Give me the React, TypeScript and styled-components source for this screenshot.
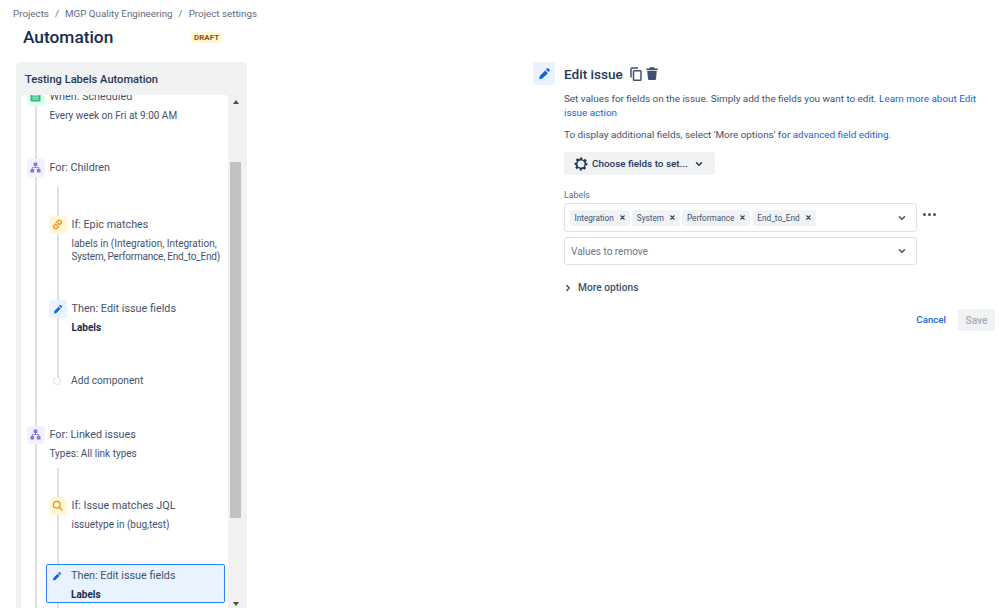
import React from "react";
import styled, { createGlobalStyle } from "styled-components";

const FONT = `Roboto, "Open Sans", "Liberation Sans", sans-serif`;

const Global = createGlobalStyle`
  html, body { margin: 0; padding: 0; background: #fff; }
  body { font-family: ${FONT}; color: #172b4d; }
  #root { width: 999px; height: 608px; overflow: hidden; }
`;

const Page = styled.div`
  width: 999px;
  height: 608px;
  overflow: hidden;
  display: flex;
  flex-direction: column;
`;
const Breadcrumbs = styled.nav`
  height: 26px;
  padding-left: 13px;
  display: flex;
  align-items: center;
  gap: 6px;
  font-size: 9.800px;
  color: #5e6c84;
`;
const Body = styled.div`
  flex: 1;
  min-height: 0;
  display: flex;
`;
const LeftColumn = styled.div`
  width: 231px;
  margin-left: 16px;
  display: flex;
  flex-direction: column;
  min-height: 0;
`;
const Header = styled.header`
  height: 36px;
  padding: 1px 0 0 7px;
  box-sizing: border-box;
  display: flex;
  align-items: flex-start;
  flex-shrink: 0;
`;
const PageTitle = styled.h1`
  margin: 0;
  width: 168px;
  font-size: 17.300px;
  line-height: 20px;
  font-weight: 500;
  color: #172b4d;
`;
const Lozenge = styled.span`
  margin-top: 5px;
  background: #fff7d6;
  color: #974f0c;
  font-size: 8px;
  font-weight: 700;
  padding: 1px 3px;
  border-radius: 2px;
  line-height: 9px;
`;
const Panel = styled.section`
  flex: 1;
  min-height: 0;
  background: #f1f2f4;
  border-radius: 4px 4px 0 0;
  display: flex;
  flex-direction: column;
  padding-left: 5px;
  padding-right: 4px;
`;
const PanelTitle = styled.h2`
  margin: 0;
  height: 33px;
  padding: 1px 0 0 4px;
  box-sizing: border-box;
  display: flex;
  align-items: center;
  font-size: 11.100px;
  font-weight: 500;
  color: #253858;
  flex-shrink: 0;
`;
const ScrollRow = styled.div`
  flex: 1;
  min-height: 0;
  display: flex;
`;
const Viewport = styled.div`
  width: 207px;
  background: #fff;
  border-radius: 3px 3px 0 0;
  overflow: hidden;
`;
const Tree = styled.div`
  margin-top: -7px;
  padding-left: 6px;
  height: 700px;
  background: linear-gradient(#dfe1e6, #dfe1e6) no-repeat 14px 0 / 2px 100%;
`;
const Nested = styled.div<{ $pad: number; $h: number; $lineTop: number; $lineH: number }>`
  padding-top: ${(p) => p.$pad}px;
  height: ${(p) => p.$h}px;
  padding-left: 22px;
  box-sizing: border-box;
  background: linear-gradient(#dfe1e6, #dfe1e6) no-repeat 30px ${(p) => p.$lineTop}px / 2px ${(p) => p.$lineH}px;
`;
const Node = styled.div<{ $mb?: number }>`
  display: flex;
  gap: 5px;
  margin-bottom: ${(p) => p.$mb ?? 0}px;
`;
const Selected = styled(Node)`
  margin-left: -3px;
  width: 179px;
  height: 39px;
  box-sizing: border-box;
  border: 1.5px solid #2684ff;
  border-radius: 2px;
  background: #e9f2ff;
  padding: 2px 0 0 1.5px;
`;
const IconBox = styled.span<{ $bg: string; $fg: string }>`
  width: 17.500px;
  height: 17.500px;
  flex-shrink: 0;
  border-radius: 3px;
  background: ${(p) => p.$bg};
  color: ${(p) => p.$fg};
  display: flex;
  align-items: center;
  justify-content: center;
`;
const NodeText = styled.div`
  padding-top: 1px;
`;
const NodeTitle = styled.div`
  font-size: 10.800px;
  line-height: 15px;
  color: #42526e;
  white-space: nowrap;
`;
const NodeSub = styled.div`
  font-size: 10px;
  line-height: 13px;
  margin-top: 5px;
  color: #42526e;
  white-space: nowrap;
`;
const TightLine = styled.span`
  letter-spacing: -0.2px;
`;
const NodeBold = styled(NodeSub)`
  font-weight: 700;
  color: #172b4d;
`;
const AddRow = styled.div`
  display: flex;
  align-items: center;
  gap: 10px;
  padding-left: 4px;
  font-size: 10.200px;
  line-height: 14px;
  color: #42526e;
`;
const Dot = styled.span`
  width: 6px;
  height: 6px;
  background: #fff;
  border: 1.5px solid #dfe1e6;
  border-radius: 50%;
`;
const Scrollbar = styled.div`
  width: 15px;
  background: #f1f1f1;
  display: flex;
  flex-direction: column;
  align-items: center;
`;
const ArrowUp = styled.span`
  margin-top: 5px;
  width: 0;
  height: 0;
  border-left: 3.5px solid transparent;
  border-right: 3.5px solid transparent;
  border-bottom: 4px solid #505050;
`;
const Thumb = styled.div`
  margin-top: 58px;
  width: 11px;
  height: 356px;
  background: #c1c1c1;
`;
const ArrowDown = styled.span`
  margin-top: 84px;
  width: 0;
  height: 0;
  border-left: 3.5px solid transparent;
  border-right: 3.5px solid transparent;
  border-top: 4px solid #505050;
`;

const RightColumn = styled.main`
  margin-left: 286px;
  padding-top: 36px;
  width: 462px;
  display: flex;
  gap: 9px;
`;
const BigIcon = styled.span`
  width: 22px;
  height: 23px;
  border-radius: 3px;
  background: #e9f2ff;
  color: #0c66e4;
  display: flex;
  align-items: center;
  justify-content: center;
  flex-shrink: 0;
`;
const Detail = styled.div`
  flex: 1;
  min-width: 0;
`;
const TitleRow = styled.div`
  height: 23px;
  display: flex;
  align-items: center;
  color: #42526e;
`;
const DetailTitle = styled.h2`
  margin: 0 7px 0 0;
  font-size: 13.600px;
  font-weight: 500;
  color: #253858;
`;
const Paragraph = styled.p<{ $mt: number }>`
  margin: ${(p) => p.$mt}px 0 0;
  font-size: 9.900px;
  line-height: 14px;
  color: #42526e;
  width: 420px;
`;
const Link = styled.a`
  color: #0c66e4;
  text-decoration: none;
`;
const ChooseButton = styled.button`
  margin-top: 10px;
  width: 151px;
  height: 23px;
  border: 0;
  border-radius: 3px;
  background: #f1f2f4;
  color: #253858;
  font: 500 9.900px ${FONT};
  display: flex;
  align-items: center;
  padding: 0 0 0 10px;
  gap: 4px;
`;
const ButtonChevron = styled.span`
  margin-left: 3px;
  display: flex;
`;
const FieldLabel = styled.div`
  margin-top: 14px;
  font-size: 8.800px;
  line-height: 12px;
  color: #5e6c84;
`;
const FieldLine = styled.div`
  display: flex;
  align-items: center;
  gap: 5.500px;
`;
const Select = styled.div<{ $h: number; $mt: number }>`
  margin-top: ${(p) => p.$mt}px;
  width: 353px;
  height: ${(p) => p.$h}px;
  box-sizing: border-box;
  border: 1px solid #dfe1e6;
  border-radius: 3px;
  display: flex;
  align-items: center;
  padding: 0 10px 0 5px;
  gap: 2.500px;
  color: #42526e;
`;
const Tag = styled.span`
  height: 16px;
  background: #f1f2f4;
  border-radius: 2px;
  padding: 0 5px 0 4.500px;
  display: flex;
  align-items: center;
  gap: 6px;
  font-size: 8.200px;
  color: #42526e;
`;
const Placeholder = styled.span`
  padding-left: 1px;
  font-size: 10px;
  color: #6b778c;
`;
const Grow = styled.span`
  flex: 1;
`;
const MoreDots = styled.span`
  display: flex;
  gap: 2px;
  margin-top: -5px;
`;
const MoreDot = styled.i`
  width: 3px;
  height: 3px;
  border-radius: 50%;
  background: #42526e;
`;
const MoreOptions = styled.div`
  margin-top: 16px;
  display: flex;
  align-items: center;
  gap: 6px;
  font-size: 10.200px;
  line-height: 14px;
  font-weight: 500;
  color: #42526e;
`;
const Actions = styled.div`
  margin-top: 14px;
  width: 431px;
  display: flex;
  align-items: center;
  justify-content: flex-end;
  gap: 12px;
`;
const Cancel = styled.span`
  margin-top: -2px;
  font-size: 9.700px;
  font-weight: 500;
  color: #0c66e4;
`;
const Save = styled.button`
  width: 37px;
  height: 22px;
  border: 0;
  border-radius: 3px;
  background: #f1f2f4;
  color: #a5adba;
  font: 500 10.200px ${FONT};
  padding: 0;
`;

const Pencil = ({ s = 10 }: { s?: number }) => (
  <svg width={s} height={s} viewBox="0 0 12 12" fill="currentColor">
    <path d="M8.2 1.4a1 1 0 0 1 1.4 0l1 1a1 1 0 0 1 0 1.4l-.9.9-2.4-2.4zM6.7 3.3l2.4 2.4-5 5-3 .7.6-3.1z" />
  </svg>
);
const Hierarchy = () => (
  <svg width="11" height="11" viewBox="0 0 12 12" fill="currentColor">
    <rect x="4" y="0.5" width="4" height="3.800" rx="0.6" />
    <rect x="0.5" y="7.700" width="4" height="3.800" rx="0.6" />
    <rect x="7.5" y="7.700" width="4" height="3.800" rx="0.6" />
    <path d="M5.5 4h1v1.600h3.500V8h-1V6.600H3V8H2V5.600h3.500z" />
  </svg>
);
const LinkIcon = () => (
  <svg width="11" height="11" viewBox="0 0 12 12" fill="none" stroke="currentColor" strokeWidth="1.4" strokeLinecap="round">
    <path d="M5 3.500 6.600 2a2 2 0 0 1 3 3L8 6.600" />
    <path d="M7 8.500 5.400 10a2 2 0 0 1-3-3L4 5.400" />
    <path d="M4.500 7.500l3-3" />
  </svg>
);
const Search = () => (
  <svg width="11" height="11" viewBox="0 0 12 12" fill="none" stroke="currentColor" strokeWidth="1.400" strokeLinecap="round">
    <circle cx="5.200" cy="5.200" r="3.700" />
    <path d="M8 8l3 3" />
  </svg>
);
const Calendar = () => (
  <svg width="11" height="11" viewBox="0 0 12 12">
    <rect x="0.500" y="1" width="11" height="10.500" rx="1" fill="#36b37e" />
    <path d="M2 5h8M2 7h8M2 9h8M4.500 4v6M7.500 4v6" stroke="#abf5d1" strokeWidth="0.700" />
  </svg>
);
const Copy = () => (
  <svg width="12" height="14" viewBox="0 0 12 14" fill="none" stroke="currentColor" strokeWidth="1.500">
    <rect x="3.500" y="3.700" width="7.500" height="9.500" rx="0.800" />
    <path d="M1 10.500V2a1 1 0 0 1 1-1h6" />
  </svg>
);
const Trash = () => (
  <svg width="12" height="13" viewBox="0 0 12 13" fill="currentColor" style={{ marginLeft: 4 }}>
    <path d="M4 0.300h4L8.700 1.500H11.700v1.500H.3V1.500h3zM1.200 3.800h9.600l-.8 8.200a1 1 0 0 1-1 .9H3a1 1 0 0 1-1-.9z" />
  </svg>
);
const Gear = () => (
  <svg width="14" height="14" viewBox="0 0 24 24" fill="#253858" fillRule="evenodd">
    <path d="M10 1h4l.6 3.200 1.800.8 2.700-1.800 2.800 2.800-1.800 2.700.8 1.800L23 10v4l-3.200.6-.8 1.800 1.800 2.700-2.800 2.800-2.700-1.800-1.800.8L14 23h-4l-.6-3.200-1.800-.8-2.700 1.800-2.800-2.800 1.800-2.700-.8-1.800L1 14v-4l3.200-.6.800-1.800L3.200 4.900 6 2.100l2.700 1.800 1.800-.8zM12 6a6 6 0 1 0 0 12 6 6 0 0 0 0-12z" />
  </svg>
);
const Chevron = ({ dir = "down", s = 8 }: { dir?: "down" | "right"; s?: number }) => (
  <svg width={s} height={s} viewBox="0 0 8 8" fill="none" stroke="currentColor" strokeWidth="1.500" strokeLinecap="round" strokeLinejoin="round">
    {dir === "down" ? <path d="M1.500 2.800 4 5.300l2.500-2.500" /> : <path d="M2.800 1.500 5.300 4 2.800 6.500" />}
  </svg>
);
const Cross = () => (
  <svg width="5" height="5" viewBox="0 0 6 6" stroke="#253858" strokeWidth="1.500" strokeLinecap="round">
    <path d="M1 1l4 4M5 1 1 5" />
  </svg>
);

const tags = ["Integration", "System", "Performance", "End_to_End"];

export default function App() {
  return (
    <Page>
      <Global />
      <Breadcrumbs>
        <span>Projects</span>
        <span>/</span>
        <span>MGP Quality Engineering</span>
        <span>/</span>
        <span>Project settings</span>
      </Breadcrumbs>
      <Body>
        <LeftColumn>
          <Header>
            <PageTitle>Automation</PageTitle>
            <Lozenge>DRAFT</Lozenge>
          </Header>
          <Panel>
            <PanelTitle>Testing Labels Automation</PanelTitle>
            <ScrollRow>
              <Viewport>
                <Tree>
                  <Node $mb={37}>
                    <IconBox $bg="#dcfff1" $fg="#36b37e"><Calendar /></IconBox>
                    <NodeText>
                      <NodeTitle>When: Scheduled</NodeTitle>
                      <NodeSub>Every week on Fri at 9:00 AM</NodeSub>
                    </NodeText>
                  </Node>
                  <Node $mb={9.5}>
                    <IconBox $bg="#f3f0ff" $fg="#8777d9"><Hierarchy /></IconBox>
                    <NodeText><NodeTitle>For: Children</NodeTitle></NodeText>
                  </Node>
                  <Nested $pad={30} $h={240} $lineTop={0} $lineH={194}>
                    <Node $mb={37}>
                      <IconBox $bg="#fff7d6" $fg="#f18d13"><LinkIcon /></IconBox>
                      <NodeText>
                        <NodeTitle>If: Epic matches</NodeTitle>
                        <NodeSub>labels in (Integration, Integration,<br /><TightLine>System, Performance, End_to_End)</TightLine></NodeSub>
                      </NodeText>
                    </Node>
                    <Node $mb={40}>
                      <IconBox $bg="#e9f2ff" $fg="#0c66e4"><Pencil /></IconBox>
                      <NodeText>
                        <NodeTitle>Then: Edit issue fields</NodeTitle>
                        <NodeBold>Labels</NodeBold>
                      </NodeText>
                    </Node>
                    <AddRow><Dot />Add component</AddRow>
                  </Nested>
                  <Node>
                    <IconBox $bg="#f3f0ff" $fg="#8777d9"><Hierarchy /></IconBox>
                    <NodeText>
                      <NodeTitle>For: Linked issues</NodeTitle>
                      <NodeSub>Types: All link types</NodeSub>
                    </NodeText>
                  </Node>
                  <Nested $pad={37} $h={180} $lineTop={8} $lineH={172}>
                    <Node $mb={33}>
                      <IconBox $bg="#fff7d6" $fg="#f18d13"><Search /></IconBox>
                      <NodeText>
                        <NodeTitle>If: Issue matches JQL</NodeTitle>
                        <NodeSub>issuetype in (bug,test)</NodeSub>
                      </NodeText>
                    </Node>
                    <Selected>
                      <IconBox $bg="transparent" $fg="#0c66e4"><Pencil /></IconBox>
                      <NodeText>
                        <NodeTitle>Then: Edit issue fields</NodeTitle>
                        <NodeBold>Labels</NodeBold>
                      </NodeText>
                    </Selected>
                  </Nested>
                </Tree>
              </Viewport>
              <Scrollbar>
                <ArrowUp />
                <Thumb />
                <ArrowDown />
              </Scrollbar>
            </ScrollRow>
          </Panel>
        </LeftColumn>
        <RightColumn>
          <BigIcon><Pencil s={13} /></BigIcon>
          <Detail>
            <TitleRow>
              <DetailTitle>Edit issue</DetailTitle>
              <Copy />
              <Trash />
            </TitleRow>
            <Paragraph $mt={7}>
              Set values for fields on the issue. Simply add the fields you want to edit.{" "}
              <Link>Learn more about Edit issue action</Link>
            </Paragraph>
            <Paragraph $mt={8}>
              To display additional fields, select 'More options' for <Link>advanced field editing</Link>.
            </Paragraph>
            <ChooseButton>
              <Gear />
              Choose fields to set...
              <ButtonChevron><Chevron /></ButtonChevron>
            </ChooseButton>
            <FieldLabel>Labels</FieldLabel>
            <FieldLine>
              <Select $h={29} $mt={2}>
                {tags.map((t) => (
                  <Tag key={t}>{t}<Cross /></Tag>
                ))}
                <Grow />
                <Chevron />
              </Select>
              <MoreDots><MoreDot /><MoreDot /><MoreDot /></MoreDots>
            </FieldLine>
            <Select $h={28} $mt={5}>
              <Placeholder>Values to remove</Placeholder>
              <Grow />
              <Chevron />
            </Select>
            <MoreOptions><Chevron dir="right" />More options</MoreOptions>
            <Actions>
              <Cancel>Cancel</Cancel>
              <Save>Save</Save>
            </Actions>
          </Detail>
        </RightColumn>
      </Body>
    </Page>
  );
}
